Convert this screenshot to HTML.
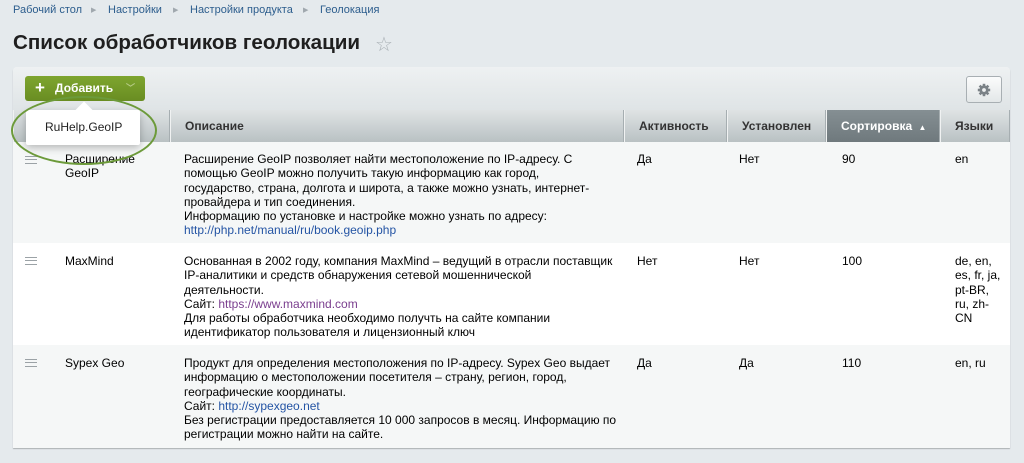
<!DOCTYPE html>
<html><head><meta charset="utf-8"><style>
*{margin:0;padding:0;box-sizing:border-box}
body{width:1024px;height:463px;background:#e5eaed;font-family:"Liberation Sans",Arial,sans-serif;position:relative;overflow:hidden;color:#000}
.a{position:absolute;white-space:nowrap}
.bc{top:4px;font-size:11px;color:#2c5d8d}
.sep{top:6px;font-size:7px;color:#a0a8ae}
h1{position:absolute;left:13px;top:31px;font-size:20.6px;font-weight:bold;color:#1f1f1f;white-space:nowrap}
.panel{position:absolute;left:13px;top:67px;width:997px;height:381px;background:#f5f7f7;border-radius:4px 4px 0 0;box-shadow:0 1px 1px rgba(0,0,0,.25);overflow:hidden}
.tb{position:absolute;left:0;top:0;width:997px;height:43px;background:linear-gradient(#eef1f2,#dfe4e6)}
.hd{position:absolute;top:43px;height:32px;background:linear-gradient(#dfe3e4,#b9c1c3);border-left:1px solid #f0f2f2;border-right:1px solid #a6aeb1;font-size:12px;font-weight:bold;color:#333;line-height:32px;padding-left:14px}
.row{position:absolute;left:0;width:997px}
.t{font-size:12px;line-height:14.3px;color:#000}
a{color:#2454a4;text-decoration:none}
.v{color:#7a3e8e}
.ham{position:absolute;left:12px;width:12px;height:8px;border-top:1.5px solid #9ba2a6;border-bottom:1.5px solid #9ba2a6}
.ham:after{content:"";position:absolute;left:0;top:1.75px;width:12px;height:1.5px;background:#9ba2a6}
</style></head><body>
<div class="a bc" style="left:13px">Рабочий стол</div>
<div class="a sep" style="left:91px">▶</div>
<div class="a bc" style="left:108px">Настройки</div>
<div class="a sep" style="left:173px">▶</div>
<div class="a bc" style="left:190px">Настройки продукта</div>
<div class="a sep" style="left:303px">▶</div>
<div class="a bc" style="left:320px">Геолокация</div>
<h1>Список обработчиков геолокации</h1>
<div class="a" style="left:375px;top:32px;font-size:20px;color:#a9b0b5">☆</div>
<div class="panel">
 <div class="tb"></div>
 <div class="a" style="left:12px;top:9px;width:120px;height:25px;background:linear-gradient(#7ea52f,#698d22);border-radius:3px;color:#fff;font-size:12px;font-weight:bold;line-height:25px">
  <span style="position:absolute;left:10px;font-size:17px;top:-1px">+</span>
  <span style="position:absolute;left:30px">Добавить</span>
  <span style="position:absolute;left:101px;font-size:9px;color:#b6cc86">﹀</span>
 </div>
 <div class="a" style="left:953px;top:9px;width:36px;height:27px;border:1px solid #a8afb3;border-radius:3px;background:linear-gradient(#fbfcfc,#e3e7e8)">
  <svg width="14" height="14" viewBox="0 0 14 14" style="position:absolute;left:10px;top:6px"><g fill="#7b8287"><circle cx="7" cy="7" r="4.6"/><rect x="5.7" y="0.8" width="2.6" height="12.4"/><rect x="0.8" y="5.7" width="12.4" height="2.6"/><rect x="5.7" y="0.8" width="2.6" height="12.4" transform="rotate(45 7 7)"/><rect x="5.7" y="0.8" width="2.6" height="12.4" transform="rotate(-45 7 7)"/></g><circle cx="7" cy="7" r="1.9" fill="#eef0f1"/></svg>
 </div>
 <div class="hd" style="left:0;width:42px"></div>
 <div class="hd" style="left:42px;width:115px">Название</div>
 <div class="hd" style="left:157px;width:454px">Описание</div>
 <div class="hd" style="left:611px;width:103px">Активность</div>
 <div class="hd" style="left:714px;width:99px">Установлен</div>
 <div class="hd" style="left:813px;width:114px;background:linear-gradient(#858f93,#6f797d);color:#fff">Сортировка <span style="font-size:8px;margin-left:3px">▲</span></div>
 <div class="hd" style="left:927px;width:70px">Языки</div>

 <div class="row" style="top:75px;height:101px;background:#f5f7f7"></div>
 <div class="ham" style="top:89px"></div>
 <div class="a t" style="left:52px;top:85px">Расширение<br>GeoIP</div>
 <div class="a t" style="left:171px;top:85px">Расширение GeoIP позволяет найти местоположение по IP-адресу. С<br>помощью GeoIP можно получить такую информацию как город,<br>государство, страна, долгота и широта, а также можно узнать, интернет-<br>провайдера и тип соединения.<br>Информацию по установке и настройке можно узнать по адресу:<br><a>http://php.net/manual/ru/book.geoip.php</a></div>
 <div class="a t" style="left:624px;top:85px">Да</div>
 <div class="a t" style="left:726px;top:85px">Нет</div>
 <div class="a t" style="left:829px;top:85px">90</div>
 <div class="a t" style="left:942px;top:85px">en</div>

 <div class="row" style="top:176px;height:102px;background:#fff"></div>
 <div class="ham" style="top:190px"></div>
 <div class="a t" style="left:52px;top:187px">MaxMind</div>
 <div class="a t" style="left:171px;top:187px">Основанная в 2002 году, компания MaxMind – ведущий в отрасли поставщик<br>IP-аналитики и средств обнаружения сетевой мошеннической<br>деятельности.<br>Сайт: <a class="v">https://www.maxmind.com</a><br>Для работы обработчика необходимо получть на сайте компании<br>идентификатор пользователя и лицензионный ключ</div>
 <div class="a t" style="left:624px;top:187px">Нет</div>
 <div class="a t" style="left:726px;top:187px">Нет</div>
 <div class="a t" style="left:829px;top:187px">100</div>
 <div class="a t" style="left:942px;top:187px">de, en,<br>es, fr, ja,<br>pt-BR,<br>ru, zh-<br>CN</div>

 <div class="row" style="top:278px;height:103px;background:#f5f7f7"></div>
 <div class="ham" style="top:292px"></div>
 <div class="a t" style="left:52px;top:289px">Sypex Geo</div>
 <div class="a t" style="left:171px;top:289px">Продукт для определения местоположения по IP-адресу. Sypex Geo выдает<br>информацию о местоположении посетителя – страну, регион, город,<br>географические координаты.<br>Сайт: <a>http://sypexgeo.net</a><br>Без регистрации предоставляется 10 000 запросов в месяц. Информацию по<br>регистрации можно найти на сайте.</div>
 <div class="a t" style="left:624px;top:289px">Да</div>
 <div class="a t" style="left:726px;top:289px">Да</div>
 <div class="a t" style="left:829px;top:289px">110</div>
 <div class="a t" style="left:942px;top:289px">en, ru</div>
</div>
<!-- popup -->
<div class="a" style="left:26px;top:110px;width:114px;height:35px;background:#fff;border-radius:2px;box-shadow:0 3px 8px rgba(0,0,0,.25)"></div>
<div class="a" style="left:78px;top:104px;width:12px;height:12px;background:#fff;transform:rotate(45deg)"></div>
<div class="a" style="left:45px;top:120px;font-size:12px;color:#222">RuHelp.GeoIP</div>
<div class="a" style="left:11px;top:96px;width:146px;height:69px;border:2px solid #6c9a3a;border-radius:50%"></div>
</body></html>
